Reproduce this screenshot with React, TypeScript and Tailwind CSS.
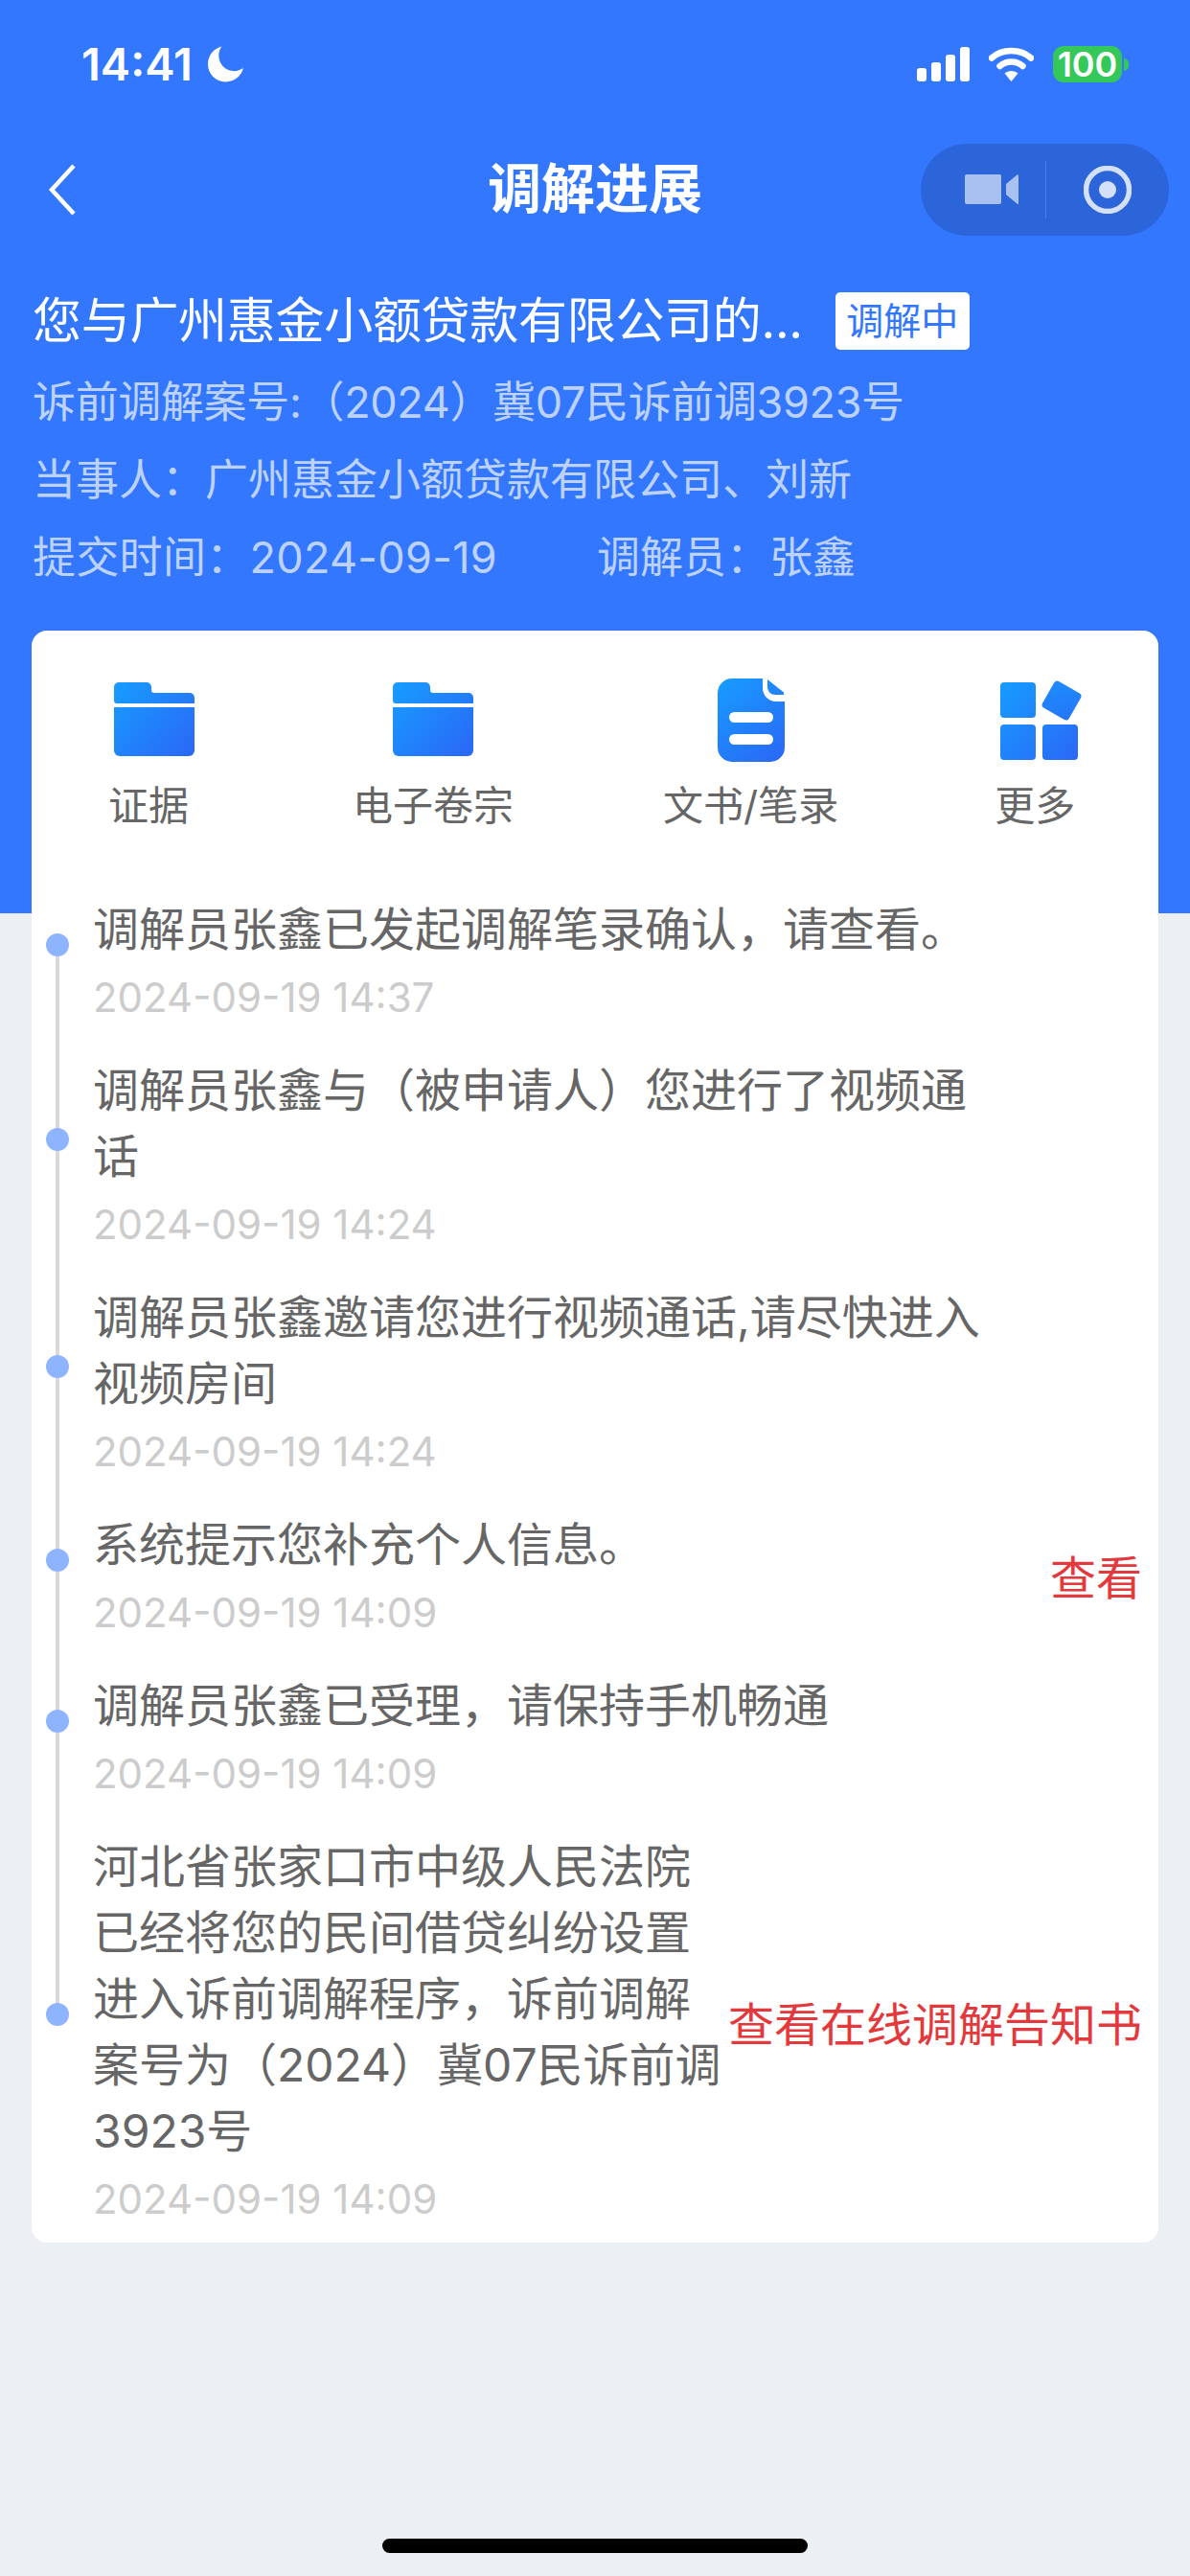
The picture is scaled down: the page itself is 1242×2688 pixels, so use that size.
const cjk = "font-['Inter','Noto_Sans_CJK_SC',sans-serif]"

const tabs = [
  { label: '证据', icon: <FolderIcon id="folder-a" />, iconClass: 'translate-x-[6px]', tabClass: '' },
  { label: '电子卷宗', icon: <FolderIcon id="folder-b" />, iconClass: '', tabClass: 'ml-[171px]' },
  { label: '文书/笔录', icon: <DocIcon />, iconClass: '', tabClass: 'ml-[156px]' },
  { label: '更多', icon: <GridIcon />, iconClass: 'translate-x-[7px]', tabClass: 'ml-[162px]' },
]

const events = [
  { text: '调解员张鑫已发起调解笔录确认，请查看。', time: '2024-09-19 14:37' },
  { text: '调解员张鑫与（被申请人）您进行了视频通话', time: '2024-09-19 14:24' },
  { text: '调解员张鑫邀请您进行视频通话,请尽快进入视频房间', time: '2024-09-19 14:24' },
  { text: '系统提示您补充个人信息。', time: '2024-09-19 14:09', action: '查看', actionClass: 'mb-[2px]' },
  { text: '调解员张鑫已受理，请保持手机畅通', time: '2024-09-19 14:09' },
  {
    text: '河北省张家口市中级人民法院已经将您的民间借贷纠纷设置进入诉前调解程序，诉前调解案号为（2024）冀07民诉前调3923号',
    time: '2024-09-19 14:09',
    action: '查看在线调解告知书',
    actionClass: 'mb-[18px]',
  },
]

function FolderIcon({ id }: { id: string }) {
  return (
    <svg width="84" height="78" viewBox="0 0 84 78">
      <defs>
        <linearGradient id={id} x1="0" y1="0" x2="84" y2="78" gradientUnits="userSpaceOnUse">
          <stop offset="0" stopColor="#179dff" />
          <stop offset="1" stopColor="#2b66f6" />
        </linearGradient>
      </defs>
      <path
        fill={`url(#${id})`}
        d="M5 0h29a5 5 0 0 1 5 5v3a3 3 0 0 0 3 3h37a5 5 0 0 1 5 5v6H3a3 3 0 0 1-3-3V5a5 5 0 0 1 5-5Z"
      />
      <path
        fill={`url(#${id})`}
        d="M0 26h84v45a6 6 0 0 1-6 6H6a6 6 0 0 1-6-6Z"
      />
    </svg>
  )
}

function DocIcon() {
  return (
    <svg width="70" height="87" viewBox="0 0 70 87">
      <defs>
        <linearGradient id="doc-grad" x1="0" y1="0" x2="70" y2="87" gradientUnits="userSpaceOnUse">
          <stop offset="0" stopColor="#179dff" />
          <stop offset="1" stopColor="#2b66f6" />
        </linearGradient>
      </defs>
      <path
        fill="url(#doc-grad)"
        d="M15 0h32v10a14 14 0 0 0 14 14h9v48a15 15 0 0 1-15 15H15A15 15 0 0 1 0 72V15A15 15 0 0 1 15 0Z"
      />
      <path fill="url(#doc-grad)" d="M52 1l17 13.5V17h-9a8 8 0 0 1-8-8Z" />
      <rect x="12" y="35" width="46" height="11" rx="5.5" fill="#fff" />
      <rect x="12" y="58" width="46" height="11" rx="5.5" fill="#fff" />
    </svg>
  )
}

function GridIcon() {
  return (
    <svg width="86" height="84" viewBox="0 -3 86 84">
      <defs>
        <linearGradient id="grid-grad" x1="0" y1="0" x2="84" y2="81" gradientUnits="userSpaceOnUse">
          <stop offset="0" stopColor="#179dff" />
          <stop offset="1" stopColor="#2b66f6" />
        </linearGradient>
      </defs>
      <rect x="0" y="0" width="37" height="37" rx="4" fill="url(#grid-grad)" />
      <rect x="0" y="44" width="37" height="37" rx="4" fill="url(#grid-grad)" />
      <rect x="44" y="44" width="37" height="37" rx="4" fill="url(#grid-grad)" />
      <rect
        x="48"
        y="3"
        width="32"
        height="32"
        rx="4"
        fill="url(#grid-grad)"
        transform="rotate(30 64 19)"
      />
    </svg>
  )
}

function StatusBar() {
  return (
    <div className="flex h-[38px] items-center justify-between pl-[85px] pr-[64px]">
      <div className="flex items-center gap-[16px]">
        <span className="font-['Inter',sans-serif] text-[47px] leading-[38px] font-semibold text-white">14:41</span>
        <svg width="39" height="38" viewBox="0 0 38 36">
          <path
            fill="#fff"
            d="M14 0C6 2 0 9 0 18c0 10 8 18 18 18 9 0 16-6 18-14-3 2-6 3-9 3-9 0-16-7-16-16 0-3 1-6 3-9Z"
          />
        </svg>
      </div>
      <div className="flex items-center">
        <svg width="55" height="36" viewBox="0 0 55 36">
          <rect x="0" y="22" width="10" height="14" rx="3" fill="#fff" />
          <rect x="15" y="16" width="10" height="20" rx="3" fill="#fff" />
          <rect x="30" y="8" width="10" height="28" rx="3" fill="#fff" />
          <rect x="45" y="0" width="10" height="36" rx="3" fill="#fff" />
        </svg>
        <svg className="ml-[20px]" width="47" height="36" viewBox="0 0 47 36">
          <path d="M3 11.5C14 1.5 33 1.5 44 11.5" fill="none" stroke="#fff" strokeWidth="6.5" strokeLinecap="round" />
          <path d="M11.5 20c7-6 17-6 24 0" fill="none" stroke="#fff" strokeWidth="6.5" strokeLinecap="round" />
          <path d="M16.5 27.5c4-3.5 10-3.5 14 0L23.5 36Z" fill="#fff" />
        </svg>
        <div className="ml-[20px] flex items-center">
          <div className="flex h-[38px] w-[72px] items-center justify-center rounded-[11px] bg-[#34c759] font-['Inter',sans-serif] text-[36px] font-semibold text-white">
            100
          </div>
          <div className="ml-[2px] h-[13px] w-[5px] rounded-r-full bg-[#34c759]" />
        </div>
      </div>
    </div>
  )
}

function NavBar() {
  return (
    <div className="relative mt-[64px] flex h-[96px] items-center justify-between pl-[50px] pr-[22px]">
      <svg width="30" height="54" viewBox="0 0 30 54">
        <path d="M27 2 4 27l23 25" fill="none" stroke="#fff" strokeWidth="4.5" />
      </svg>
      <h1 className={`${cjk} absolute inset-x-0 -top-[1px] text-center text-[56px] leading-[96px] font-bold text-white`}>调解进展</h1>
      <div className="relative flex h-[96px] w-[259px] items-center rounded-full bg-[#2b65d9]">
        <svg className="ml-[46px]" width="57" height="32" viewBox="0 0 57 32">
          <rect x="0" y="0" width="38" height="31" rx="2" fill="#a9c1f0" />
          <path d="M56 1v30l-1 0L43 21v-11L55 0Z" fill="#a9c1f0" />
        </svg>
        <div className="ml-[27px] h-[60px] w-px bg-[#4a7ee6]" />
        <svg className="ml-[39px]" width="50" height="50" viewBox="0 0 50 50">
          <circle cx="25" cy="25" r="22.5" fill="none" stroke="#d4e0f7" strokeWidth="5.5" />
          <circle cx="25" cy="25" r="9" fill="#d4e0f7" />
        </svg>
      </div>
    </div>
  )
}

function CaseInfo() {
  return (
    <div className={`${cjk} px-[34px]`}>
      <div className="mt-[59px] flex h-[60px] items-center">
        <span className="text-[51px] leading-[60px] tracking-[-0.3px] text-white">您与广州惠金小额贷款有限公司的...</span>
        <span className="ml-[34px] flex h-[60px] w-[140px] items-center justify-center rounded-[5px] bg-white text-[39px] text-[#3377ff]">
          调解中
        </span>
      </div>
      <div className="mt-[14px] text-[45px] leading-[81px] text-[#bcd2fb]">
        <p className="tracking-[-0.35px]">诉前调解案号:（2024）冀07民诉前调3923号</p>
        <p>当事人：广州惠金小额贷款有限公司、刘新</p>
        <p className="flex">
          <span className="w-[589px] tracking-[0.3px]">提交时间：2024-09-19</span>
          <span>调解员：张鑫</span>
        </p>
      </div>
    </div>
  )
}

function Tabs() {
  return (
    <div className="flex pl-[80px] pt-[50px]">
      {tabs.map((tab) => (
        <div key={tab.label} className={`flex flex-col items-center ${tab.tabClass}`}>
          <div className={`flex h-[86px] items-center ${tab.iconClass}`}>{tab.icon}</div>
          <span className="mt-[17px] text-[42px] leading-[60px] text-[#666666]">{tab.label}</span>
        </div>
      ))}
    </div>
  )
}

function Timeline() {
  return (
    <div className="relative mt-[64px] flex flex-col gap-[28px]">
      <div className="absolute bottom-[227px] left-[25px] top-[53px] w-[4px] bg-[#d9d9d9]" />
      {events.map((event) => (
        <div key={event.time + event.text} className="relative flex items-center pl-[64px] pr-[17px]">
          <div className="absolute left-[15px] top-[calc(50%-31px)] h-[24px] w-[24px] rounded-full bg-[#8fb4ff]" />
          <div className="min-w-0 max-w-[935px] flex-1">
            <p className="text-[48px] leading-[69px] text-[#666666]">{event.text}</p>
            <p className="mt-[2px] text-[42px] leading-[69px] text-[#cccccc]">{event.time}</p>
          </div>
          {event.action && (
            <span className={`ml-auto shrink-0 text-[48px] leading-[69px] text-[#e4393c] ${event.actionClass}`}>
              {event.action}
            </span>
          )}
        </div>
      ))}
    </div>
  )
}

export default function App() {
  return (
    <div className={`${cjk} relative h-[2688px] w-[1242px] overflow-hidden bg-[#ecf0f5]`}>
      <div className="absolute inset-x-0 top-0 h-[953px] bg-[#3377ff]" />
      <div className="relative pt-[48px]">
        <StatusBar />
        <NavBar />
        <CaseInfo />
        <div className="mx-[33px] mt-[36px] rounded-[16px] bg-white pb-[11px]">
          <Tabs />
          <Timeline />
        </div>
      </div>
      <div className="absolute bottom-[24px] left-[399px] h-[15px] w-[444px] rounded-full bg-black" />
    </div>
  )
}
